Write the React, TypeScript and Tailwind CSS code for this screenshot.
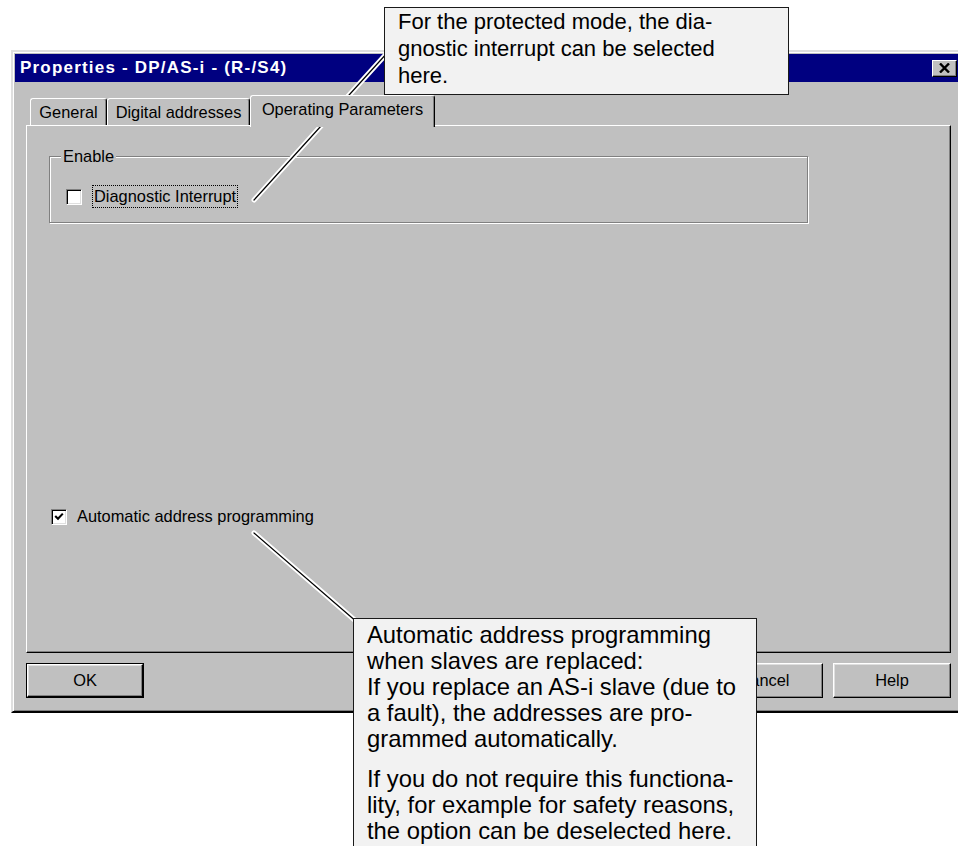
import React from "react";

function CloseGlyph() {
  return (
    <svg width="11" height="10" viewBox="0 0 11 10">
      <path d="M1 0.5 L10 9.5 M10 0.5 L1 9.5" stroke="#000" strokeWidth="2.4" />
    </svg>
  );
}

function CheckBox({ checked }: { checked: boolean }) {
  return (
    <span className="flex h-[16px] w-[16px] shrink-0 items-center justify-center border border-t-[#808080] border-l-[#808080] border-r-white border-b-white bg-white shadow-[inset_1px_1px_0_#000,inset_-1px_-1px_0_#dfdfdf]">
      {checked && (
        <svg width="10" height="9" viewBox="0 0 10 9">
          <path d="M1.2 4 L4 6.8 L8.8 1.6" fill="none" stroke="#000" strokeWidth="2.1" />
        </svg>
      )}
    </span>
  );
}

function Tab({ label, width }: { label: string; width: string }) {
  return (
    <div
      className={`flex h-[27px] items-center justify-center rounded-t-[3px] border-t border-l border-r border-t-white border-l-white border-r-black bg-[#c0c0c0] shadow-[inset_-1px_0_0_#808080] ${width}`}
    >
      {label}
    </div>
  );
}

function PushButton({ label, isDefault }: { label: string; isDefault?: boolean }) {
  if (isDefault) {
    return (
      <div className="h-[35px] w-[118px] border border-black">
        <div className="flex h-full w-full items-center justify-center border border-t-white border-l-white border-r-black border-b-black shadow-[inset_-1px_-1px_0_#808080,inset_1px_1px_0_#dfdfdf]">
          {label}
        </div>
      </div>
    );
  }
  return (
    <div className="flex h-[35px] w-[118px] items-center justify-center border border-t-white border-l-white border-r-black border-b-black shadow-[inset_-1px_-1px_0_#808080,inset_1px_1px_0_#dfdfdf]">
      {label}
    </div>
  );
}

export default function App() {
  return (
    <div className="relative h-[846px] w-[958px] overflow-hidden bg-white pt-[50px] font-['Liberation_Sans',Arial,sans-serif] text-black">
      {/* Properties dialog */}
      <div className="ml-[11px] h-[663px] w-[951px] border-2 border-t-[#dfdfdf] border-l-[#dfdfdf] border-r-black border-b-black bg-[#c0c0c0] p-[2px] text-[16.4px] shadow-[inset_1px_1px_0_#fff,inset_-1px_-1px_0_#808080]">
        {/* Title bar */}
        <div className="flex h-[28px] items-center justify-between bg-[#000080] pl-[5px] pr-[1px]">
          <span className="text-[17px] font-bold tracking-[1.2px] text-white">
            Properties - DP/AS-i - (R-/S4)
          </span>
          <span className="flex h-[17px] w-[25px] items-center justify-center border border-t-white border-l-white border-r-black border-b-black bg-[#c0c0c0] shadow-[inset_-1px_-1px_0_#808080]">
            <CloseGlyph />
          </span>
        </div>

        {/* Tabs */}
        <div className="ml-[11px] mt-[13px]">
          <div className="relative z-10 flex h-[30px] items-end pl-[4px]">
            <Tab label="General" width="w-[77px]" />
            <Tab label="Digital addresses" width="w-[143px]" />
            <div className="-mb-[2px] flex h-[32px] w-[185px] items-start justify-center rounded-t-[3px] border-t border-l border-r border-t-white border-l-white border-r-black bg-[#c0c0c0] pt-[2px] shadow-[inset_-1px_0_0_#808080]">
              <span className="leading-[22px]">Operating Parameters</span>
            </div>
          </div>

          {/* Tab page */}
          <div className="h-[528px] w-[925px] border border-t-white border-l-white border-r-black border-b-black pl-[22px] pt-[20px] shadow-[inset_-1px_-1px_0_#808080]">
            <fieldset className="h-[77px] w-[759px] border border-[#808080] pt-[19px] shadow-[inset_1px_1px_0_#fff,1px_1px_0_#fff]">
              <legend className="ml-[11px] bg-[#c0c0c0] px-[2px] leading-[20px]">Enable</legend>
              <div className="flex items-center gap-[10px] pl-[16px]">
                <CheckBox checked={false} />
                <span className="border border-dotted border-black px-[1px] leading-[21px]">
                  Diagnostic Interrupt
                </span>
              </div>
            </fieldset>

            <div className="ml-[2px] mt-[282px] flex items-center gap-[8px]">
              <CheckBox checked />
              <span className="border border-transparent px-[1px] leading-[21px]">
                Automatic address programming
              </span>
            </div>
          </div>

          {/* Buttons */}
          <div className="mt-[10px] flex w-[925px] items-center justify-between">
            <PushButton label="OK" isDefault />
            <div className="flex gap-[10px]">
              <PushButton label="Cancel" />
              <PushButton label="Help" />
            </div>
          </div>
        </div>
      </div>

      {/* Leader lines */}
      <svg
        className="pointer-events-none absolute left-0 top-0"
        width="958"
        height="846"
        viewBox="0 0 958 846"
      >
        <g strokeLinecap="round">
          <line x1="388" y1="52" x2="254" y2="200" stroke="#fff" strokeWidth="5" />
          <line x1="388" y1="52" x2="254" y2="200" stroke="#000" strokeWidth="1.2" />
          <line x1="254" y1="533" x2="358" y2="623" stroke="#fff" strokeWidth="5" />
          <line x1="254" y1="533" x2="358" y2="623" stroke="#000" strokeWidth="1.2" />
        </g>
      </svg>

      {/* Callout: diagnostic interrupt */}
      <div className="absolute left-[384px] top-[7px] h-[88px] w-[405px] border border-[#1a1a1a] bg-[#f2f2f2] pl-[13px] text-[22px] leading-[27px]">
        <div className="whitespace-nowrap">For the protected mode, the dia-</div>
        <div className="whitespace-nowrap">gnostic interrupt can be selected</div>
        <div className="whitespace-nowrap">here.</div>
      </div>

      {/* Callout: automatic address programming */}
      <div className="absolute left-[353px] top-[618px] h-[240px] w-[404px] border border-[#1a1a1a] bg-[#f2f2f2] pl-[13px] pt-[3px] text-[23.8px] leading-[26px]">
        <div className="whitespace-nowrap">Automatic address programming</div>
        <div className="whitespace-nowrap">when slaves are replaced:</div>
        <div className="whitespace-nowrap">If you replace an AS-i slave (due to</div>
        <div className="whitespace-nowrap">a fault), the addresses are pro-</div>
        <div className="whitespace-nowrap">grammed automatically.</div>
        <div className="mt-[14px] whitespace-nowrap">If you do not require this functiona-</div>
        <div className="whitespace-nowrap">lity, for example for safety reasons,</div>
        <div className="whitespace-nowrap">the option can be deselected here.</div>
      </div>
    </div>
  );
}
